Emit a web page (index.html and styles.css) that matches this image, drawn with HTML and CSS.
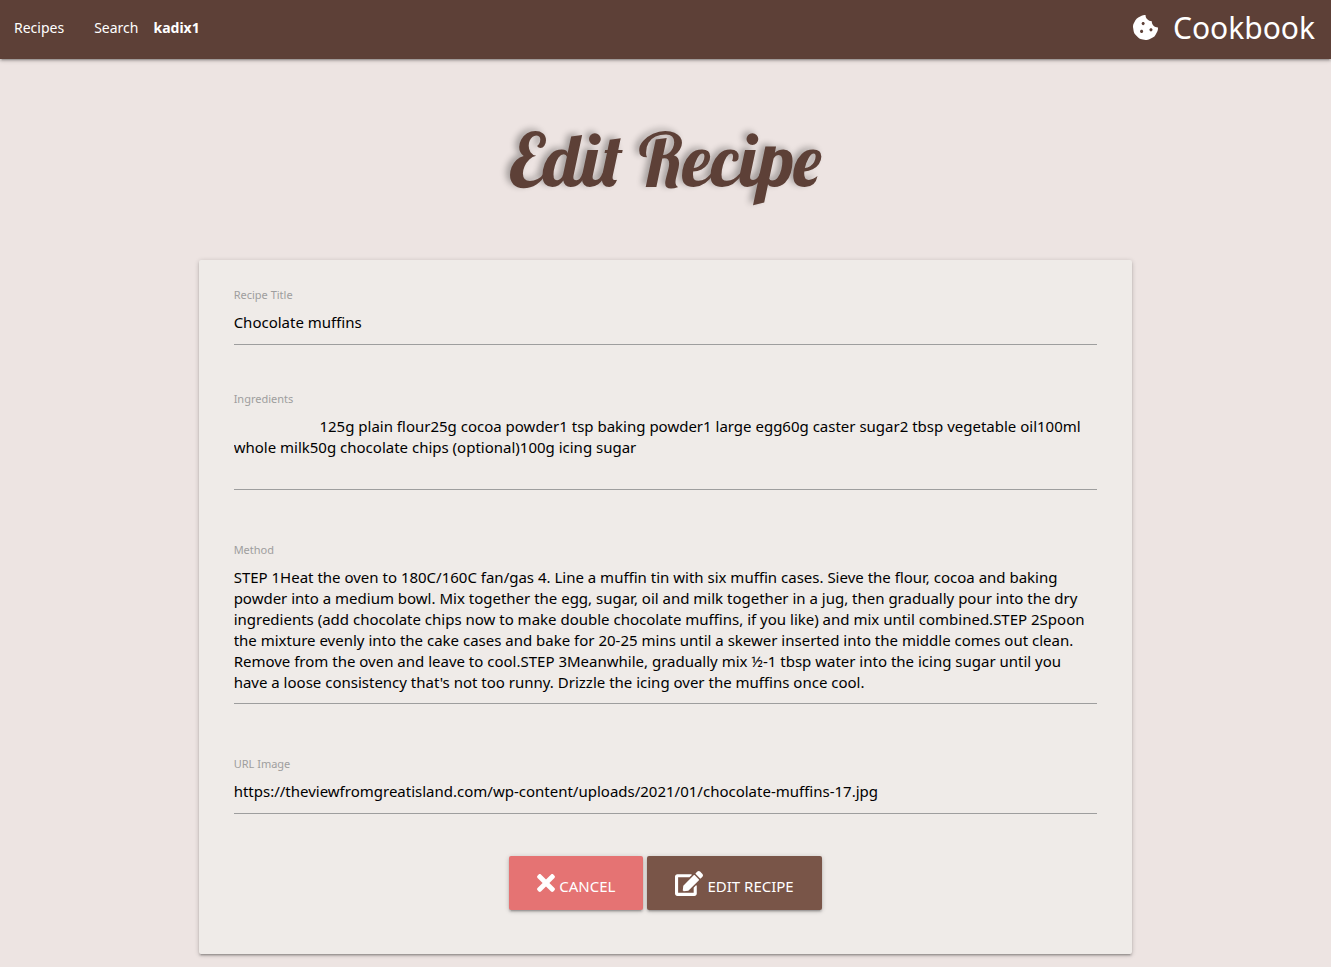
FILE: index.html
```html
<!DOCTYPE html>
<html lang="en">
<head>
<meta charset="utf-8">
<meta name="viewport" content="width=device-width, initial-scale=1">
<title>Cookbook</title>
<link rel="stylesheet" href="styles.css">
</head>
<body>
<nav class="navbar">
  <div class="nav-links">
    <a class="nav-link" href="#">Recipes</a>
    <a class="nav-link" href="#">Search</a>
    <a class="nav-user" href="#">kadix1</a>
  </div>
  <a class="brand" href="#">
    <svg class="brand-icon" viewBox="0 0 512 512" aria-hidden="true"><path d="M510.52 255.82c-69.97-.85-126.47-57.69-126.47-127.86-70.17 0-127-56.49-127.86-126.45-27.26-4.14-55.13.3-79.72 12.82l-69.13 35.22a132.221 132.221 0 0 0-57.79 57.81l-35.1 68.88a132.645 132.645 0 0 0-12.82 80.95l12.08 76.27a132.521 132.521 0 0 0 37.16 72.96l54.77 54.76a132.036 132.036 0 0 0 72.71 37.06l76.71 12.15c27.51 4.36 55.7-.11 80.53-12.76l69.13-35.21a132.273 132.273 0 0 0 57.79-57.81l35.1-68.88c12.56-24.64 17.01-52.58 12.91-79.91zM176 368c-17.67 0-32-14.33-32-32s14.33-32 32-32 32 14.33 32 32-14.33 32-32 32zm32-160c-17.67 0-32-14.33-32-32s14.33-32 32-32 32 14.33 32 32-14.33 32-32 32zm160 128c-17.67 0-32-14.33-32-32s14.33-32 32-32 32 14.33 32 32-14.33 32-32 32z"/></svg>
    <span>Cookbook</span>
  </a>
</nav>
<main class="container">
  <h1 class="page-title">Edit Recipe</h1>
  <form class="card">
    <div class="field">
      <label for="title">Recipe Title</label>
      <input id="title" type="text" value="Chocolate muffins">
    </div>
    <div class="field field-long">
      <label for="ingredients">Ingredients</label>
      <textarea id="ingredients" rows="3">                      125g plain flour25g cocoa powder1 tsp baking powder1 large egg60g caster sugar2 tbsp vegetable oil100ml whole milk50g chocolate chips (optional)100g icing sugar</textarea>
    </div>
    <div class="field field-long">
      <label for="method">Method</label>
      <textarea id="method" rows="6">STEP 1Heat the oven to 180C/160C fan/gas 4. Line a muffin tin with six muffin cases. Sieve the flour, cocoa and baking powder into a medium bowl. Mix together the egg, sugar, oil and milk together in a jug, then gradually pour into the dry ingredients (add chocolate chips now to make double chocolate muffins, if you like) and mix until combined.STEP 2Spoon the mixture evenly into the cake cases and bake for 20-25 mins until a skewer inserted into the middle comes out clean. Remove from the oven and leave to cool.STEP 3Meanwhile, gradually mix ½-1 tbsp water into the icing sugar until you
have a loose consistency that's not too runny. Drizzle the icing over the muffins once cool.</textarea>
    </div>
    <div class="field field-last">
      <label for="image">URL Image</label>
      <input id="image" type="text" value="https://theviewfromgreatisland.com/wp-content/uploads/2021/01/chocolate-muffins-17.jpg">
    </div>
    <div class="actions">
      <button class="btn btn-cancel" type="button">
        <svg class="icon-times" viewBox="0 0 352 512" aria-hidden="true"><path d="M242.72 256l100.07-100.07c12.28-12.28 12.28-32.19 0-44.48l-22.24-22.24c-12.28-12.28-32.19-12.28-44.48 0L176 189.28 75.93 89.21c-12.28-12.28-32.19-12.28-44.48 0L9.21 111.45c-12.28 12.28-12.28 32.19 0 44.48L109.28 256 9.21 356.07c-12.28 12.28-12.28 32.19 0 44.48l22.24 22.24c12.28 12.28 32.2 12.28 44.48 0L176 322.72l100.07 100.07c12.28 12.28 32.2 12.28 44.48 0l22.24-22.24c12.28-12.28 12.28-32.19 0-44.48L242.72 256z"/></svg>
        <span class="btn-text">Cancel</span>
      </button>
      <button class="btn btn-edit" type="submit">
        <svg class="icon-edit" viewBox="0 0 576 512" aria-hidden="true"><path d="M402.6 83.2l90.2 90.2c3.8 3.8 3.8 10 0 13.8L274.4 405.6l-92.8 10.3c-12.4 1.4-22.9-9.1-21.5-21.5l10.3-92.8L388.8 83.2c3.8-3.8 10-3.8 13.8 0zm162-22.9l-48.8-48.8c-15.2-15.2-39.9-15.2-55.2 0l-35.4 35.4c-3.8 3.8-3.8 10 0 13.8l90.2 90.2c3.8 3.8 10 3.8 13.8 0l35.4-35.4c15.2-15.3 15.2-40 0-55.2zM384 346.2V448H64V128h229.8c3.2 0 6.2-1.3 8.5-3.5l40-40c7.6-7.6 2.2-20.5-8.5-20.5H48C21.5 64 0 85.5 0 112v352c0 26.5 21.5 48 48 48h352c26.5 0 48-21.5 48-48V306.2c0-10.7-12.9-16-20.5-8.5l-40 40c-2.2 2.3-3.5 5.3-3.5 8.5z"/></svg>
        <span class="btn-text">Edit Recipe</span>
      </button>
    </div>
  </form>
</main>
</body>
</html>
```
FILE: styles.css
```css
* { box-sizing: border-box; }

body {
  margin: 0;
  background: #ede4e2;
  color: #000;
  font-family: "Segoe UI", "Noto Sans", "Open Sans", sans-serif;
  font-size: 15px;
}

svg { fill: currentColor; flex: none; }

.navbar {
  display: flex;
  align-items: center;
  justify-content: space-between;
  height: 59px;
  padding: 0 16px 4px 14px;
  background: #5d4037;
  box-shadow: 0 2px 2px 0 rgba(0, 0, 0, .14), 0 3px 1px -2px rgba(0, 0, 0, .12), 0 1px 5px 0 rgba(0, 0, 0, .2);
}
.navbar a { color: #fff; text-decoration: none; }
.nav-links { display: flex; font-size: 14px; }
.nav-link { margin-right: 30px; }
.nav-link + .nav-link { margin-right: 15px; }
.nav-user { font-weight: 700; }
.brand { display: flex; align-items: center; gap: 15px; font-size: 30px; line-height: 56px; }
.brand-icon { width: 25px; height: 25px; }

.container { margin: 0 calc(15% - 1px) 13px; }

.page-title {
  margin: 0;
  padding: 51px 0 50px;
  color: #5d4037;
  font: 400 74px/100px Lobster, "Liberation Serif", serif;
  text-align: center;
  text-shadow: -4px -2px 6px rgba(0, 0, 0, .3);
}

.card {
  padding: 25px 35px 44px;
  border-radius: 2px;
  background: #efebe8;
  box-shadow: 0 2px 2px 0 rgba(0, 0, 0, .14), 0 3px 1px -2px rgba(0, 0, 0, .12), 0 1px 5px 0 rgba(0, 0, 0, .2);
}

.field { margin-bottom: 44px; }
.field-long { margin-bottom: 50px; }
.field-last { margin-bottom: 42px; }
.field label {
  display: block;
  color: #9e9e9e;
  font-size: 11px;
  line-height: 20px;
}
.field input,
.field textarea {
  display: block;
  width: 100%;
  margin: 0;
  border: 0;
  border-bottom: 1px solid #9e9e9e;
  border-radius: 0;
  outline: 0;
  background: transparent;
  color: inherit;
  font: inherit;
}
.field input { height: 40px; padding: 0 0 5px; }
.field textarea {
  padding: 7px 0 10px;
  line-height: 21px;
  resize: none;
  overflow: hidden;
}

.actions { display: flex; justify-content: center; gap: 4px; }
.btn {
  display: flex;
  align-items: center;
  gap: 4px;
  height: 54px;
  padding: 0 28px;
  border: 0;
  border-radius: 2px;
  color: #fff;
  font: inherit;
  text-transform: uppercase;
  box-shadow: 0 2px 2px 0 rgba(0, 0, 0, .14), 0 3px 1px -2px rgba(0, 0, 0, .12), 0 1px 5px 0 rgba(0, 0, 0, .2);
}
.btn-text { padding-top: 6px; }
.btn-cancel { background: #e57373; }
.btn-edit { background: #795548; }
.icon-times { width: 18px; height: 26px; }
.icon-edit { width: 28px; height: 25px; }
```
